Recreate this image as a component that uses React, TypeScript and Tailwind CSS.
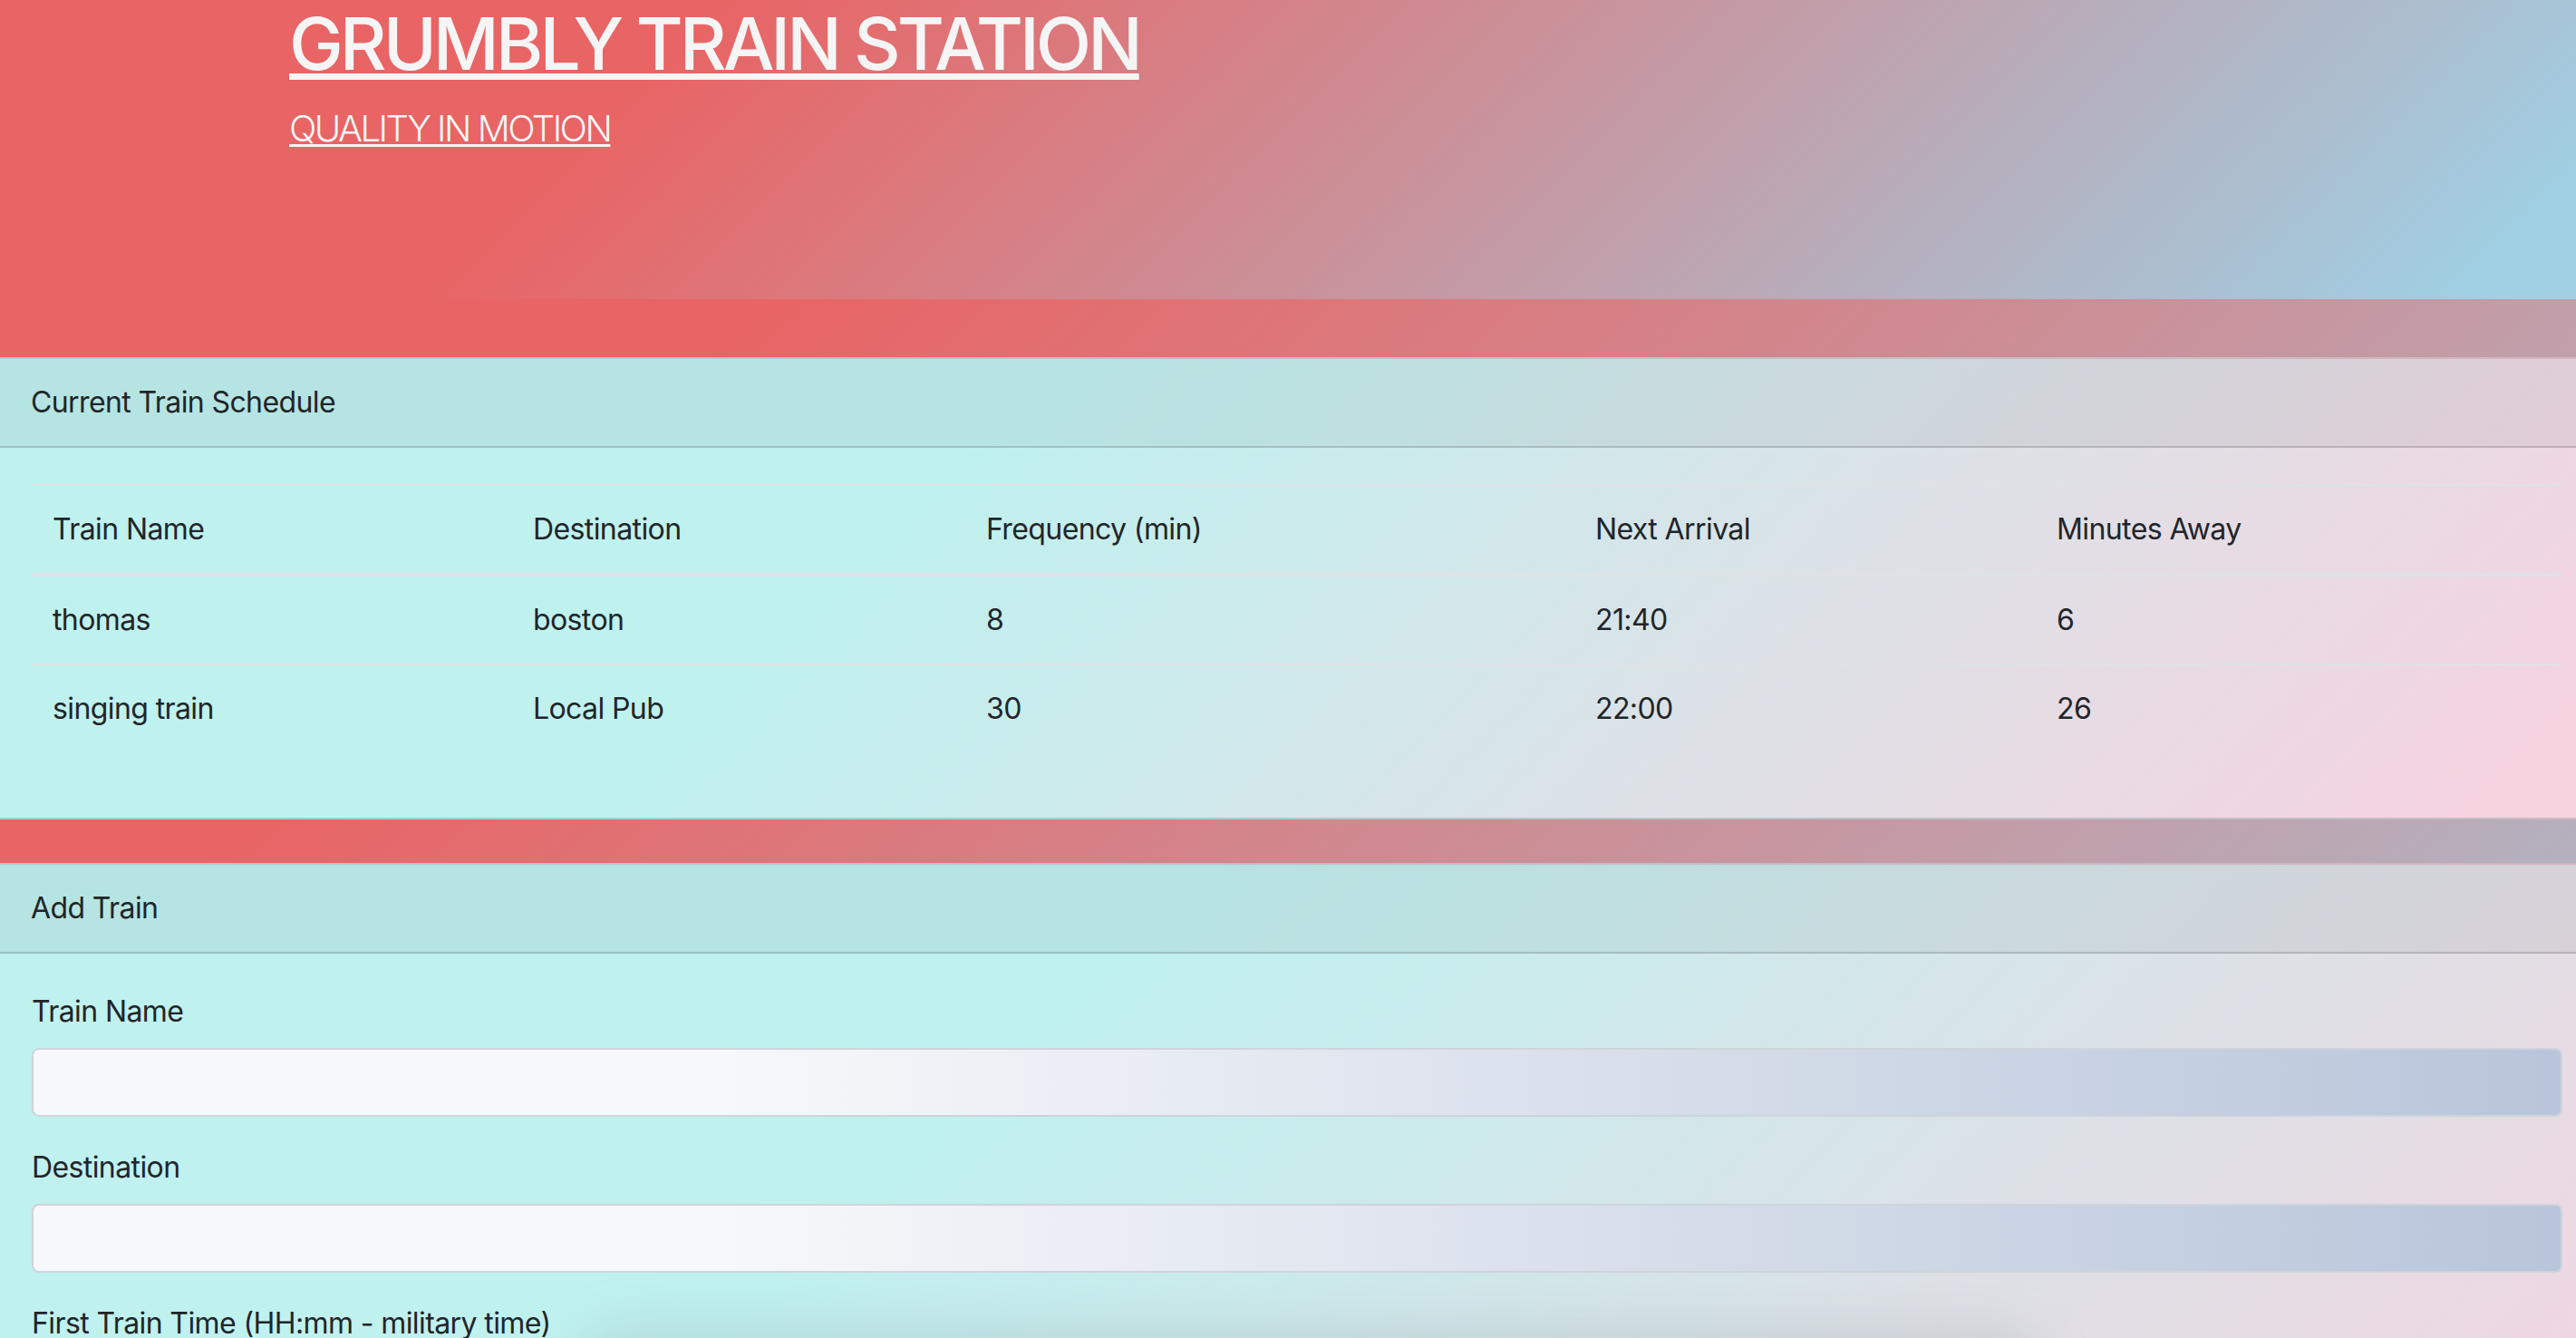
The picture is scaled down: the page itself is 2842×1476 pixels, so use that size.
import { useState } from 'react'

interface Train {
  name: string
  destination: string
  frequency: number
  nextArrival: string
  minutesAway: number
}

const trains: Train[] = [
  { name: 'thomas', destination: 'boston', frequency: 8, nextArrival: '21:40', minutesAway: 6 },
  { name: 'singing train', destination: 'Local Pub', frequency: 30, nextArrival: '22:00', minutesAway: 26 },
]

const columns = [
  { label: 'Train Name', width: 'w-[530px]' },
  { label: 'Destination', width: 'w-[500px]' },
  { label: 'Frequency (min)', width: 'w-[672px]' },
  { label: 'Next Arrival', width: 'w-[509px]' },
  { label: 'Minutes Away', width: 'w-[581px]' },
]

const fields = [
  'Train Name',
  'Destination',
  'First Train Time (HH:mm - military time)',
  'Frequency (min)',
]

function Card({ title, children }: { title: string; children: React.ReactNode }) {
  return (
    <section className="border-y-2 border-black/[0.14] bg-[linear-gradient(135deg,#bff1ef_35%,#f8d2df_100%)]">
      <div className="border-b-2 border-black/[0.14] bg-black/[0.05] px-[34px] py-[24px] text-[32px] leading-[48px] text-[#212529]">
        {title}
      </div>
      {children}
    </section>
  )
}

export default function App() {
  const [values, setValues] = useState<Record<string, string>>({})

  return (
    <div className="min-h-screen overflow-hidden bg-[linear-gradient(135deg,#e96464_830px,#9fd0e4_3440px)] font-[Inter,'Liberation_Sans',sans-serif] tracking-[-0.6px] text-[#212529]">
      <header className="h-[330px] bg-[linear-gradient(135deg,#e96464_555px,#9fd0e4_2170px)] pl-[319px] text-[#f5f5f5]">
        <h1 className="m-0 text-[80px] font-medium leading-[96px] tracking-[-4px]">
          <a href="#" className="underline decoration-[7px] underline-offset-[4px]">GRUMBLY TRAIN STATION</a>
        </h1>
        <p className="mt-[16px] text-[40px] font-light leading-[60px] tracking-[-2.5px]">
          <a href="#" className="underline decoration-[3px] underline-offset-[3px]">QUALITY IN MOTION</a>
        </p>
      </header>

      <div className="mt-[64px]">
        <Card title="Current Train Schedule">
          <div className="pb-[40px] pl-[34px] pr-[15px] pt-[40px]">
            <table className="mb-[32px] w-[2792px] table-fixed border-collapse text-[32px] leading-[48px]">
              <thead>
                <tr>
                  {columns.map(c => (
                    <th key={c.label} className={`${c.width} border-b-4 border-t-2 border-[#dee2e6] px-[24px] py-[24px] text-left font-normal`}>
                      {c.label}
                    </th>
                  ))}
                </tr>
              </thead>
              <tbody>
                {trains.map(t => (
                  <tr key={t.name}>
                    <td className="border-t-2 border-[#dee2e6] px-[24px] py-[24px]">{t.name}</td>
                    <td className="border-t-2 border-[#dee2e6] px-[24px] py-[24px]">{t.destination}</td>
                    <td className="border-t-2 border-[#dee2e6] px-[24px] py-[24px]">{t.frequency}</td>
                    <td className="border-t-2 border-[#dee2e6] px-[24px] py-[24px]">{t.nextArrival}</td>
                    <td className="border-t-2 border-[#dee2e6] px-[24px] py-[24px]">{t.minutesAway}</td>
                  </tr>
                ))}
              </tbody>
            </table>
          </div>
        </Card>
      </div>

      <div className="mt-[48px]">
        <Card title="Add Train">
          <form className="relative flex flex-col pb-[40px] pl-[35px] pr-[15px] pt-[40px]" onSubmit={e => e.preventDefault()}>
            {fields.map((f, i) => (
              <div key={f} className="relative mb-[32px] flex flex-col">
                <label className="mb-[16px] text-[32px] leading-[48px]">{f}</label>
                {i === 2 && (
                  <div className="pointer-events-none absolute left-[600px] top-[30px] h-[120px] w-[1620px] rounded-full bg-[#8a969c]/25 blur-[28px]" />
                )}
                <input
                  value={values[f] ?? ''}
                  onChange={e => setValues(v => ({ ...v, [f]: e.target.value }))}
                  className="relative h-[76px] rounded-[8px] border-2 border-[#ced4da] bg-[linear-gradient(to_right,#f7f8fb_27%,#b8c5da_100%)] px-[24px] text-[32px] outline-none"
                />
              </div>
            ))}
            <button type="submit" className="w-fit rounded-[8px] bg-[#007bff] px-[24px] py-[12px] text-[32px] leading-[48px] text-white">
              Submit
            </button>
          </form>
        </Card>
      </div>
    </div>
  )
}
